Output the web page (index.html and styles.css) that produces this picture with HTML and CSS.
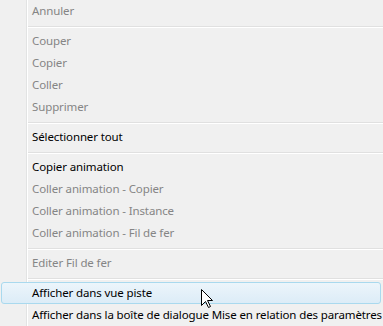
FILE: index.html
```html
<!DOCTYPE html>
<html>
<head>
<meta charset="utf-8">
<link rel="stylesheet" href="styles.css">
</head>
<body>
<div class="menu">
  <div class="item disabled">Annuler</div>
  <div class="sep"></div>
  <div class="item disabled">Couper</div>
  <div class="item disabled">Copier</div>
  <div class="item disabled">Coller</div>
  <div class="item disabled">Supprimer</div>
  <div class="sep"></div>
  <div class="item">Sélectionner tout</div>
  <div class="sep"></div>
  <div class="item">Copier animation</div>
  <div class="item disabled">Coller animation - Copier</div>
  <div class="item disabled">Coller animation - Instance</div>
  <div class="item disabled">Coller animation - Fil de fer</div>
  <div class="sep"></div>
  <div class="item disabled">Editer Fil de fer</div>
  <div class="sep"></div>
  <div class="item hover">Afficher dans vue piste</div>
  <div class="item">Afficher dans la boîte de dialogue Mise en relation des paramètres</div>
</div>
<svg class="cursor" width="13" height="20" viewBox="0 0 13 20">
  <path d="M0.5 0.5 L0.5 16.5 L4.5 12.5 L7.5 18.5 L9.5 17.5 L6.5 11.5 L11.5 11.5 Z" fill="#fff" stroke="#000" stroke-width="1" stroke-linejoin="miter"/>
</svg>
</body>
</html>
```
FILE: styles.css
```css
html, body {
  margin: 0;
  padding: 0;
  background: #f0f0f0;
  overflow: hidden;
}
.menu {
  display: flex;
  flex-direction: column;
  width: 383px;
  height: 326px;
  background: linear-gradient(to right, transparent 26px, #e2e3e3 26px, #e2e3e3 27px, #ffffff 27px, #ffffff 28px, transparent 28px);
  font-family: "Noto Sans", "Open Sans", sans-serif;
  font-size: 11.5px;
  letter-spacing: -0.12px;
  color: #000;
}
.item {
  height: 22px;
  line-height: 22px;
  padding-left: 32px;
  white-space: nowrap;
  box-sizing: border-box;
  flex: none;
}
.disabled {
  color: #858585;
}
.sep {
  flex: none;
  height: 8px;
  padding-top: 4px;
  margin-left: 28px;
  box-sizing: border-box;
}
.sep::before {
  content: "";
  display: block;
  height: 1px;
  background: #e0e0e0;
  border-bottom: 1px solid #ffffff;
}
.hover {
  margin: 0 2px 0 1px;
  padding-left: 30px;
  line-height: 20px;
  border: 1px solid #a9d9ee;
  border-radius: 3px;
  background: linear-gradient(to bottom, #ecf5fb, #dcecf7);
}
.cursor {
  position: absolute;
  left: 201px;
  top: 289px;
}
```
